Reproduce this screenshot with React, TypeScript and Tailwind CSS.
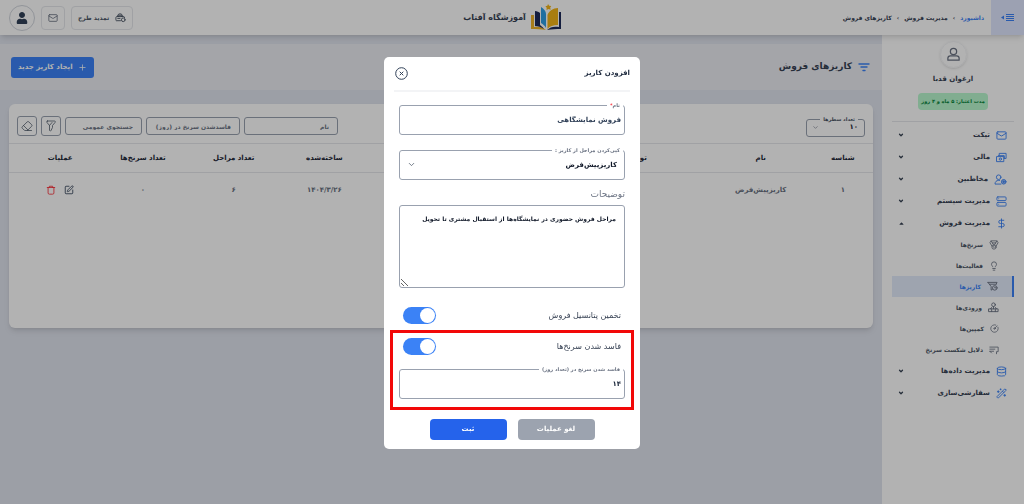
import { useState } from 'react'
import type { ReactNode } from 'react'
import { ChevronDown, CircleGauge, Database, DollarSign, Eraser, Lightbulb, Mail, Medal, Plus, Server, SquarePen, Trash2, UserRound, Wand2 } from 'lucide-react'
import { FaUser, FaCaretUp } from 'react-icons/fa'
import clsx from 'clsx'

type NavItem = {
  label: string
  icon: ReactNode
  open?: boolean
  children?: { label: string; icon: ReactNode; active?: boolean }[]
}

/* ---------- Icons ---------- */

const svgProps = {
  viewBox: '0 0 24 24',
  fill: 'none',
  stroke: 'currentColor',
  strokeWidth: 2,
  strokeLinecap: 'round' as const,
  strokeLinejoin: 'round' as const,
}

function CardsIcon() {
  return (
    <svg {...svgProps} className="size-[11px]">
      <path d="M7 7V3h15v11h-4M5 8h13v5M2 10h15v11H2z" />
      <circle cx="9.500" cy="15.500" r="2.500" />
    </svg>
  )
}

function ContactIcon() {
  return (
    <svg {...svgProps} viewBox="0 0 28 24" className="h-[11px] w-[13px]">
      <circle cx="10" cy="7" r="5" />
      <path d="M15 22H2c0-5 3-8 8-8h2" />
      <circle cx="21" cy="17" r="5" fill="currentColor" fillOpacity="0.4" />
      <path d="M21 15v4M19 17h4" />
    </svg>
  )
}

function FunnelClockIcon() {
  return (
    <svg {...svgProps} className="size-[11px]">
      <path d="M2 3h20l-2 4M2 3l7 9v8l3-2M6 7h14" />
      <circle cx="17" cy="15" r="5" />
      <path d="M17 13v2h2" />
    </svg>
  )
}

function InboxIcon() {
  return (
    <svg {...svgProps} className="size-[11px]">
      <circle cx="12" cy="6" r="4" />
      <path d="M12 10v5M2 15h20v6H2zM5 15l3-3M19 15l-3-3M8 15v6M16 15v6" />
    </svg>
  )
}

function ReasonIcon() {
  return (
    <svg {...svgProps} className="size-[10px]">
      <path d="M2 5h20v11h-4v5M2 10h12M2 15h9M6 19l-4-4" />
    </svg>
  )
}

function FunnelIcon() {
  return (
    <svg {...svgProps} strokeWidth={1.5} className="size-[12px]">
      <path d="M5 2h14c2 0 2 2 1 3l-5 6v4l-3 6c-1 2-3 1-3-1v-9L4 5C3 4 3 2 5 2zM9 11l5-6" />
    </svg>
  )
}

function RenewIcon() {
  return (
    <svg {...svgProps} className="size-[11px]">
      <path d="M12 19H3c-1 0-1-1-1-2v-5c0-1 1-2 2-2h15c1 0 2 1 2 2M5 10c0-4 3-6 6-6s6 2 6 6M8 10V7h6v3M6 14h5" />
      <circle cx="18" cy="17" r="4" />
    </svg>
  )
}

function Logo() {
  return (
    <svg viewBox="0 0 30 27" className="h-[27px] w-[30px]">
      <path d="M0 11h3v12c5-1 9 0 12 3-5-1-10-1-15-1z" fill="#f0b429" />
      <path d="M30 8v17c-5 0-9 0-14 1 3-3 7-4 12-3V8z" fill="#1e2a5a" />
      <path d="M4 7c2 0 4 1 5 2v12c1 1 3 2 4 4-3-2-6-3-9-3z" fill="#1e2a5a" />
      <path d="M10 3c3 2 5 4 5 7v14c-1-2-3-4-5-5z" fill="#2e9fe6" />
      <path d="M27 4v17c-5 0-8 1-10.500 4V11C18 7 22 4 27 4z" fill="#f2b417" />
      <path d="M17 0l1.200 1.800 2 .2-1 1.800.5 2-2.200-.8-2 .9.2-2.100-1.300-1.600 2-.4z" fill="#f2b417" />
    </svg>
  )
}

/* ---------- Data ---------- */

const navItems: NavItem[] = [
  { label: 'تیکت', icon: <Mail className="size-[11px]" /> },
  { label: 'مالی', icon: <CardsIcon /> },
  { label: 'مخاطبین', icon: <ContactIcon /> },
  { label: 'مدیریت سیستم', icon: <Server className="size-[11px]" /> },
  {
    label: 'مدیریت فروش',
    icon: <DollarSign className="size-[11px]" />,
    open: true,
    children: [
      { label: 'سرنخ‌ها', icon: <Medal className="size-[10px]" /> },
      { label: 'فعالیت‌ها', icon: <Lightbulb className="size-[10px]" /> },
      { label: 'کاریزها', icon: <FunnelClockIcon />, active: true },
      { label: 'ورودی‌ها', icon: <InboxIcon /> },
      { label: 'کمپین‌ها', icon: <CircleGauge className="size-[9px]" /> },
      { label: 'دلایل شکست سرنخ', icon: <ReasonIcon /> },
    ],
  },
  { label: 'مدیریت داده‌ها', icon: <Database className="size-[11px]" /> },
  { label: 'سفارشی‌سازی', icon: <Wand2 className="size-[11px]" /> },
]

const columns = [
  { label: 'شناسه', width: 'w-[7%]' },
  { label: 'نام', width: 'w-[12%]' },
  { label: 'توضیحات', width: 'w-[18%]' },
  { label: 'فاسدشدن سرنخ', width: 'w-[21%]' },
  { label: 'ساخته‌شده', width: 'w-[11%]' },
  { label: 'تعداد مراحل', width: 'w-[10%]' },
  { label: 'تعداد سرنخ‌ها', width: 'w-[11%]' },
  { label: 'عملیات', width: 'w-[10%] pl-4' },
]

const rows = [
  { id: '۱', name: 'کاریزپیش‌فرض', description: '', expiry: '', createdAt: '۱۴۰۴/۳/۲۶', steps: '۶', leads: '۰' },
]

/* ---------- Page ---------- */

function Header() {
  return (
    <header className="relative z-10 grid h-[35px] shrink-0 grid-cols-[1fr_auto_1fr] items-center bg-white shadow-md">
      <div className="flex h-full items-center gap-[7px]">
        <button type="button" aria-label="منو" className="flex h-full w-[33px] items-center justify-center bg-[#e0e7ff] text-[#3b82f6]">
          <svg viewBox="0 0 13 7" className="h-[7px] w-[13px]" fill="currentColor">
            <path d="M5 0h8v1H5zM5 2h8v1H5zM5 4h8v1H5zM5 6h8v1H5zM0 3.500l3-2v4z" />
          </svg>
        </button>
        <nav className="flex items-center gap-[5px] text-[6px] font-bold text-gray-700">
          <a href="#" className="text-[#3b82f6]">داشبورد</a>
          <span>›</span>
          <a href="#">مدیریت فروش</a>
          <span>›</span>
          <a href="#">کاریزهای فروش</a>
        </nav>
      </div>
      <div className="flex items-center gap-[5px]" dir="ltr">
        <span className="text-[8px] font-bold text-gray-700">آموزشگاه آفتاب</span>
        <Logo />
      </div>
      <div className="flex items-center justify-end gap-[6px] pl-[9px]">
        <button type="button" className="flex h-6 items-center gap-[6px] rounded border border-gray-200 px-[6px] text-[6px] font-bold text-gray-600">
          <RenewIcon />
          تمدید طرح
        </button>
        <button type="button" aria-label="پیام‌ها" className="flex h-6 w-6 items-center justify-center rounded border border-gray-200 text-gray-500">
          <Mail className="size-[10px]" />
        </button>
        <button type="button" aria-label="حساب کاربری" className="flex size-[26px] items-center justify-center rounded-full border border-gray-300 text-slate-700">
          <FaUser className="size-[12px]" />
        </button>
      </div>
    </header>
  )
}

function Sidebar() {
  return (
    <aside className="w-[142px] shrink-0 bg-white px-[10px]">
      <div className="flex flex-col items-center border-b border-gray-200 pb-[11px] pt-[6px]">
        <div className="flex size-[27px] items-center justify-center rounded-full border border-gray-100 text-gray-500 shadow-sm">
          <svg {...svgProps} className="size-[15px]">
            <circle cx="12" cy="7" r="5" />
            <path d="M3 21v-3c0-2 1-4 4-4h10c3 0 4 2 4 4v3z" />
          </svg>
        </div>
        <p className="mt-1 text-[7px] leading-[14px] font-bold text-gray-700">ارغوان قدبا</p>
        <p className="mt-[7px] rounded-sm bg-green-200 px-[3px] text-[5px] leading-[17px] font-bold text-green-700">مدت اعتبار: ۵ ماه و ۴ روز</p>
      </div>
      <nav className="mt-[2px] text-[7px] font-bold text-gray-700">
        {navItems.map(item => (
          <div key={item.label}>
            <button type="button" className="flex h-[22px] w-full items-center gap-[6px] pr-[7px] pl-[6px]">
              <span className="text-[#3b82f6]">{item.icon}</span>
              <span className="grow text-right">{item.label}</span>
              {item.open ? <FaCaretUp className="size-[7px]" /> : <ChevronDown className="size-[6px]" strokeWidth={5} />}
            </button>
            {item.children?.map(child => (
              <a
                key={child.label}
                href="#"
                className={clsx(
                  'flex h-[21px] items-center gap-[6px] text-[6px]',
                  child.active ? 'border-r-2 border-[#3b82f6] bg-[#e3ebfb] pr-[14px] text-[#3b82f6]' : 'pr-[15px] text-gray-600',
                )}
              >
                <span className="text-gray-500">{child.icon}</span>
                {child.label}
              </a>
            ))}
          </div>
        ))}
      </nav>
    </aside>
  )
}

function SearchInput({ label, className }: { label: string; className: string }) {
  return (
    <input
      aria-label={label}
      placeholder={label}
      className={clsx('h-[18px] rounded-[3px] border border-gray-400 px-2 text-[6px] font-bold placeholder:text-gray-500', className)}
    />
  )
}

function PipelineTable() {
  return (
    <section className="mx-[9px] mt-[14px] h-[224px] rounded-md bg-white shadow-md">
      <div className="flex h-10 items-center gap-1 border-b border-gray-200 px-2 pt-[5px]">
        <fieldset className="relative ml-auto h-[22px] w-[59px] rounded-[3px] border border-gray-400 px-[6px]">
          <legend className="px-[3px] text-[5px] leading-[8px] font-bold text-gray-600">
            <label htmlFor="page-size">تعداد سطرها</label>
          </legend>
          <select id="page-size" className="block w-full appearance-none text-[7px] leading-[9px] font-bold text-gray-800">
            <option>۱۰</option>
          </select>
          <ChevronDown className="pointer-events-none absolute left-[5px] top-px size-[7px] text-gray-500" />
        </fieldset>
        <SearchInput label="نام" className="w-[94px]" />
        <SearchInput label="فاسدشدن سرنخ در (روز)" className="w-[94px]" />
        <SearchInput label="جستجوی عمومی" className="w-[77px]" />
        <button type="button" aria-label="فیلتر" className="flex size-5 items-center justify-center rounded-[3px] border border-gray-400 text-gray-600">
          <FunnelIcon />
        </button>
        <button type="button" aria-label="پاک کردن" className="flex size-5 items-center justify-center rounded-[3px] border border-gray-400 text-gray-600">
          <Eraser className="size-[12px]" strokeWidth={1.500} />
        </button>
      </div>
      <table className="w-full table-fixed text-center text-[7px]">
        <thead>
          <tr className="h-[28px] border-b border-gray-200 text-gray-800">
            {columns.map(column => (
              <th key={column.label} className={clsx('font-bold', column.width)}>{column.label}</th>
            ))}
          </tr>
        </thead>
        <tbody>
          {rows.map(row => (
            <tr key={row.id} className="h-[36px] font-bold text-gray-500">
              <td>{row.id}</td>
              <td>{row.name}</td>
              <td>{row.description}</td>
              <td>{row.expiry}</td>
              <td>{row.createdAt}</td>
              <td>{row.steps}</td>
              <td>{row.leads}</td>
              <td className="pl-4">
                <div className="flex items-center justify-center gap-2">
                  <button type="button" aria-label="ویرایش" className="text-slate-700"><SquarePen className="size-[10px]" /></button>
                  <button type="button" aria-label="حذف" className="text-red-500">
                    <svg {...svgProps} className="size-[10px]">
                      <path d="M3 6h18M5 6v13c0 2 1 3 3 3h8c2 0 3-1 3-3V6M8 6V3h8v3" />
                    </svg>
                  </button>
                </div>
              </td>
            </tr>
          ))}
        </tbody>
      </table>
    </section>
  )
}

function Field({ id, label, required, children }: { id: string; label: string; required?: boolean; children: ReactNode }) {
  return (
    <fieldset className="relative h-[35px] rounded-[3px] border border-gray-400 px-[1px]">
      <legend className="px-[3px] text-[5px] leading-[10px] font-bold text-gray-500">
        <label htmlFor={id}>{label}{required && <span className="text-red-500">*</span>}</label>
      </legend>
      {children}
    </fieldset>
  )
}

function Toggle({ label, checked, onChange }: { label: string; checked: boolean; onChange: (value: boolean) => void }) {
  return (
    <label className="flex h-[17px] items-center justify-between px-[4px] text-[8px] text-gray-700">
      {label}
      <input type="checkbox" role="switch" checked={checked} onChange={e => onChange(e.target.checked)} className="peer sr-only" />
      <span className="flex h-[17px] w-[33px] justify-start rounded-full bg-gray-300 p-px peer-checked:bg-[#3b82f6]" dir={checked ? 'rtl' : 'ltr'}>
        <span className="size-[15px] rounded-full bg-white" />
      </span>
    </label>
  )
}

function PipelineDialog() {
  const [name, setName] = useState('فروش نمایشگاهی')
  const [description, setDescription] = useState('مراحل فروش حضوری در نمایشگاه‌ها از استقبال مشتری تا تحویل')
  const [days, setDays] = useState('۱۴')
  const [estimate, setEstimate] = useState(true)
  const [expires, setExpires] = useState(true)

  return (
    <div className="fixed inset-0 z-20 flex items-center justify-center bg-black/30 pt-[2px]">
      <form role="dialog" aria-label="افزودن کاریز" className="w-[256px] rounded-[5px] bg-white pb-[9px]" onSubmit={e => e.preventDefault()}>
        <div className="mx-[10px] flex h-[35px] items-center justify-between border-b-2 border-gray-100 pl-px">
          <h2 className="text-[7px] font-bold text-slate-800">افزودن کاریز</h2>
          <button type="button" aria-label="بستن" className="text-slate-700">
            <svg viewBox="0 0 13 13" className="size-[13px]" fill="none" stroke="currentColor">
              <circle cx="6.500" cy="6.500" r="5.800" />
              <path d="M4.700 4.700l3.600 3.600M8.300 4.700l-3.600 3.600" />
            </svg>
          </button>
        </div>

        <div className="flex flex-col gap-[10px] px-[15px] pt-2">
          <Field id="name" label="نام" required>
            <input id="name" value={name} onChange={e => setName(e.target.value)} className="block h-[19px] w-full px-[2px] text-[7px] font-bold text-slate-700" />
          </Field>
          <Field id="source" label="کپی‌کردن مراحل از کاریز :">
            <select id="source" className="block h-[21px] w-full appearance-none px-[6px] text-[7px] font-bold text-gray-900">
              <option>کاریزپیش‌فرض</option>
            </select>
            <ChevronDown className="pointer-events-none absolute left-[7px] top-[5px] size-[9px] text-gray-600" />
          </Field>
        </div>

        <div className="px-[15px] pt-[7px]">
          <label htmlFor="description" className="block text-[9px] leading-[14px] text-gray-500">توضیحات</label>
          <textarea
            id="description"
            value={description}
            onChange={e => setDescription(e.target.value)}
            className="mt-[4px] block h-[83px] w-full rounded-[3px] border border-gray-400 px-2 py-[6px] text-[6px] leading-[14px] font-bold text-gray-900"
          />
        </div>

        <div className="px-[15px] pt-[19px]">
          <Toggle label="تخمین پتانسیل فروش" checked={estimate} onChange={setEstimate} />
        </div>

        <div className="mx-[6px] mt-[6px] border-3 border-[#f20808] px-[6px] pt-[5px] pb-2">
          <Toggle label="فاسد شدن سرنخ‌ها" checked={expires} onChange={setExpires} />
          <div className="pt-[9px]">
            <Field id="days" label="فاسد شدن سرنخ در (تعداد روز)">
              <input id="days" value={days} onChange={e => setDays(e.target.value)} className="block h-[19px] w-full px-[2px] text-[7px] font-bold text-slate-800" />
            </Field>
          </div>
        </div>

        <div className="flex justify-center gap-[11px] pt-[9px] text-[7px] font-bold text-white">
          <button type="button" className="h-[21px] w-[77px] rounded bg-[#9ca3af]">لغو عملیات</button>
          <button type="submit" className="h-[21px] w-[77px] rounded bg-[#2563eb]">ثبت</button>
        </div>
      </form>
    </div>
  )
}

export default function App() {
  return (
    <div dir="rtl" lang="fa" className="flex min-h-screen flex-col bg-[#e0e4ee] font-['DejaVu_Sans',sans-serif]">
      <Header />
      <div className="flex grow">
        <Sidebar />
        <main className="min-w-0 grow pt-[9px]">
          <div className="flex h-[46px] items-center justify-between bg-[#ebecf2] pr-3 pl-[11px]">
            <h1 className="flex items-center gap-[6px] text-[9px] font-bold text-gray-700">
              <svg viewBox="0 0 12 9" className="h-[9px] w-[12px] text-[#3b82f6]" fill="none" stroke="currentColor" strokeWidth="1.400" strokeLinecap="round">
                <path d="M1 1h10M3 4h6M5 7.500h2" />
              </svg>
              کاریزهای فروش
            </h1>
            <button type="button" className="flex h-[21px] items-center gap-[5px] rounded-[3px] bg-[#3b82f6] px-[7px] text-[7px] font-bold text-white">
              <Plus className="size-[9px]" />
              ایجاد کاریز جدید
            </button>
          </div>
          <PipelineTable />
        </main>
      </div>
      <PipelineDialog />
    </div>
  )
}
